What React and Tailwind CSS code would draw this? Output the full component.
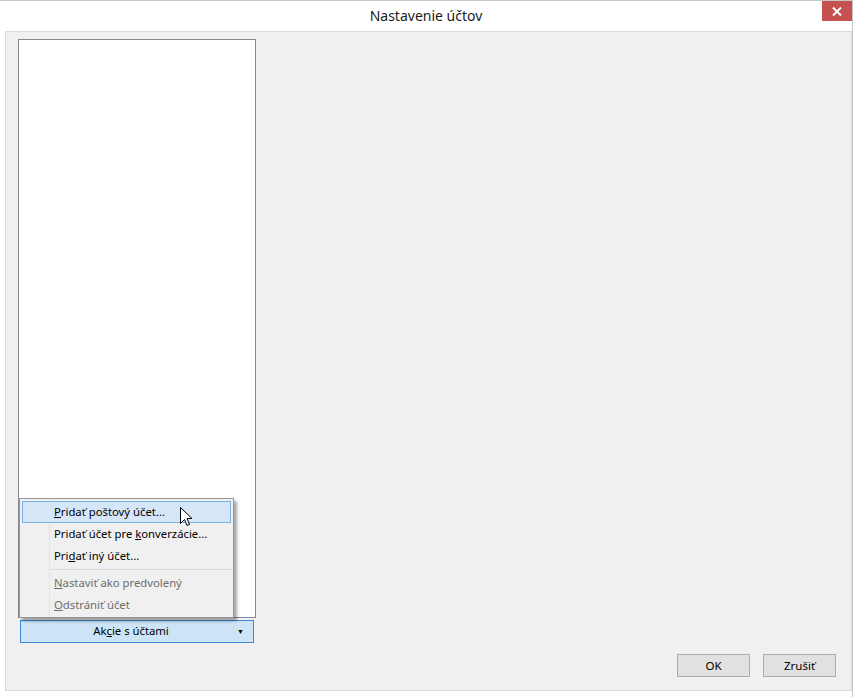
import React from 'react';

const font = { fontFamily: '"Noto Sans", "Open Sans", sans-serif' };

const Cursor = () => (
  <svg width="13" height="20" viewBox="0 0 13 20" className="absolute left-[157px] top-[5px]">
    <path d="M0.5 0.5 L0.5 16.5 L4.5 12.5 L7 18.5 L9.5 17.5 L7 11.5 L12 11.5 Z" fill="#fff" stroke="#000" strokeWidth="1" strokeLinejoin="miter" />
  </svg>
);

const MenuItem = ({ children, active, disabled }) => (
  <div
    className={
      'relative h-[22px] flex items-center pl-[31px] pt-[1px] text-[11.3px] border ' +
      (active ? 'bg-[#d5e6f8] border-[#7eb1e6]' : 'border-transparent') +
      (disabled ? ' text-[#6d6d6d]' : ' text-black')
    }
  >
    {children}
  </div>
);

const AccountMenu = () => (
  <div className="absolute left-[1px] top-[459px] w-[215px] h-[120px] bg-[#f0f0f0] border border-[#979797] shadow-[3px_3px_3px_rgba(0,0,0,0.35)] px-[2px] pt-[2px]">
    <div className="absolute left-[29px] top-0 bottom-0 w-px bg-[#e2e2e2]" />
    <MenuItem active>
      <span><u>P</u>ridať poštový účet...</span>
      <Cursor />
    </MenuItem>
    <MenuItem>
      <span>Pridať účet pre <u>k</u>onverzácie...</span>
    </MenuItem>
    <MenuItem>
      <span>Pri<u>d</u>ať iný účet...</span>
    </MenuItem>
    <div className="h-[5px] flex items-center pl-[29px]">
      <div className="w-full h-px bg-[#d7d7d7]" />
    </div>
    <MenuItem disabled>
      <span><u>N</u>astaviť ako predvolený</span>
    </MenuItem>
    <MenuItem disabled>
      <span><u>O</u>dstrániť účet</span>
    </MenuItem>
  </div>
);

const DialogButton = ({ children }) => (
  <button className="w-[73px] h-[23px] bg-[#e1e1e1] border border-[#adadad] text-[11.5px] text-black flex items-center justify-center">
    {children}
  </button>
);

export default function App() {
  return (
    <div className="w-[858px] h-[697px] bg-white overflow-hidden" style={font}>
      <div className="w-[853px] h-full border-t border-r border-[#c8c8c8] flex flex-col">
        {/* title bar */}
        <div className="relative h-[30px] flex items-center justify-center pb-[1px]">
          <span className="text-[14px] text-[#1b1b1b]">Nastavenie účtov</span>
          <div className="absolute right-0 top-0 w-[30px] h-[20px] bg-[#c75050] flex items-center justify-center">
            <svg width="10" height="9" viewBox="0 0 10 9">
              <path d="M1 0.5 L9 8.5 M9 0.5 L1 8.5" stroke="#fff" strokeWidth="2" />
            </svg>
          </div>
        </div>

        {/* content */}
        <div className="ml-[5px] h-[660px] bg-[#f0f0f0] border border-[#dadada] flex flex-col pt-[7px] pl-[12px] pr-[15px]">
          <div className="relative flex flex-col">
            <div className="w-[238px] h-[579px] bg-white border border-[#828790]" />
            <button className="mt-[2px] ml-[2px] w-[234px] h-[23px] bg-[#cde4f7] border border-[#3c8ad8] relative text-[11.3px] text-black flex items-center justify-center pr-[12px]">
              <span>Ak<u>c</u>ie s účtami</span>
              <span className="absolute right-[9px] top-[7px] text-[7px] leading-none">▼</span>
            </button>
            <AccountMenu />
          </div>
          <div className="mt-[11px] flex justify-end gap-[13px]">
            <DialogButton>OK</DialogButton>
            <DialogButton>Zrušiť</DialogButton>
          </div>
        </div>
      </div>
    </div>
  );
}
